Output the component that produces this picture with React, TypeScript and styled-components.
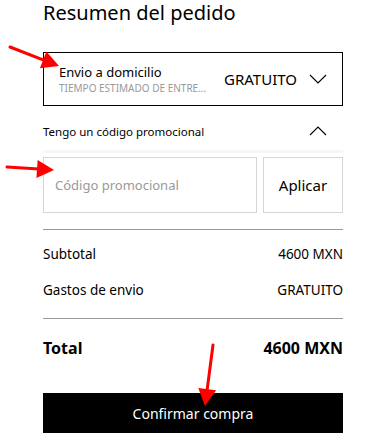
import React from "react";
import styled, { createGlobalStyle } from "styled-components";

const Global = createGlobalStyle`
  html, body { margin: 0; padding: 0; background: #fff; }
  body { font-family: "Noto Sans", "Open Sans", sans-serif; color: #000; }
  * { box-sizing: border-box; }
`;

const Page = styled.div`
  position: relative;
  width: 367px;
  height: 440px;
  overflow: hidden;
  padding-left: 43px;
`;

const Column = styled.div`
  width: 300px;
  display: flex;
  flex-direction: column;
`;

const Title = styled.h1`
  margin: 0;
  font-size: 20px;
  font-weight: 400;
  line-height: 26px;
  height: 26px;
`;

const ShippingBox = styled.div`
  margin-top: 26px;
  height: 54px;
  border: 1px solid #000;
  display: flex;
  align-items: center;
  padding: 0 15px 0 15px;
`;

const ShippingInfo = styled.div`
  flex: 1;
  min-width: 0;
  display: flex;
  flex-direction: column;
  align-items: flex-start;
`;

const ShippingName = styled.div`
  font-size: 13px;
  line-height: 17px;
`;

const ShippingSub = styled.div`
  font-size: 10px;
  line-height: 14px;
  color: #999;
  text-transform: uppercase;
  white-space: nowrap;
`;

const Price = styled.div`
  font-size: 15px;
  margin-right: 12px;
`;

const Chevron = styled.svg`
  display: block;
  flex: none;
`;

const PromoToggle = styled.div`
  height: 44px;
  display: flex;
  align-items: center;
  justify-content: space-between;
  padding-right: 16px;
  padding-top: 6px;
`;

const PromoLabel = styled.span`
  font-size: 11.5px;
`;

const Band = styled.div`
  height: 3px;
  background: #f7f7f7;
`;

const PromoRow = styled.div`
  margin-top: 4px;
  height: 56px;
  display: flex;
  gap: 6px;
`;

const PromoInput = styled.input`
  flex: 1;
  min-width: 0;
  height: 100%;
  border: 1px solid #d6d6d6;
  padding: 0 11px;
  font-family: inherit;
  font-size: 13px;
  outline: none;
  &::placeholder { color: #999; }
`;

const ApplyButton = styled.button`
  width: 80px;
  height: 100%;
  border: 1px solid #d6d6d6;
  background: #fff;
  font-family: inherit;
  font-size: 15px;
  color: #000;
  padding: 0;
`;

const Divider = styled.div<{ $top: number }>`
  height: 1px;
  background: #999;
  margin-top: ${(p) => p.$top}px;
`;

const SummaryRow = styled.div<{ $bold?: boolean; $h: number }>`
  display: flex;
  justify-content: space-between;
  align-items: flex-end;
  height: ${(p) => p.$h}px;
  font-size: ${(p) => (p.$bold ? "16px" : "13.5px")};
  font-weight: ${(p) => (p.$bold ? 700 : 400)};
  line-height: 20px;
`;

const ConfirmButton = styled.button`
  margin-top: 35px;
  height: 40px;
  width: 100%;
  border: none;
  background: #000;
  color: #fff;
  font-family: inherit;
  font-size: 14px;
  padding: 0;
`;

const Arrows = styled.svg`
  position: absolute;
  left: 0;
  top: 0;
  pointer-events: none;
`;

function Arrow({ x1, y1, x2, y2 }: { x1: number; y1: number; x2: number; y2: number }) {
  const dx = x2 - x1;
  const dy = y2 - y1;
  const len = Math.hypot(dx, dy);
  const ux = dx / len;
  const uy = dy / len;
  const hl = 17;
  const hw = 9;
  const bx = x2 - ux * hl;
  const by = y2 - uy * hl;
  const p1 = `${bx - uy * hw},${by + ux * hw}`;
  const p2 = `${bx + uy * hw},${by - ux * hw}`;
  return (
    <g>
      <line x1={x1} y1={y1} x2={bx + ux * 2} y2={by + uy * 2} stroke="#f00" strokeWidth={3} strokeLinecap="round" />
      <polygon points={`${x2},${y2} ${p1} ${p2}`} fill="#f00" />
    </g>
  );
}

export default function App() {
  return (
    <>
      <Global />
      <Page>
        <Column>
          <Title>Resumen del pedido</Title>
          <ShippingBox>
            <ShippingInfo>
              <ShippingName>Envio a domicilio</ShippingName>
              <ShippingSub>Tiempo estimado de entre...</ShippingSub>
            </ShippingInfo>
            <Price>GRATUITO</Price>
            <Chevron width="18" height="10" viewBox="0 0 18 10">
              <polyline points="1,1 9,9 17,1" fill="none" stroke="#000" strokeWidth="1.1" />
            </Chevron>
          </ShippingBox>
          <PromoToggle>
            <PromoLabel>Tengo un código promocional</PromoLabel>
            <Chevron width="18" height="10" viewBox="0 0 18 10">
              <polyline points="1,9 9,1 17,9" fill="none" stroke="#000" strokeWidth="1.1" />
            </Chevron>
          </PromoToggle>
          <Band />
          <PromoRow>
            <PromoInput placeholder="Código promocional" />
            <ApplyButton>Aplicar</ApplyButton>
          </PromoRow>
          <Divider $top={16} />
          <SummaryRow $h={34}>
            <span>Subtotal</span>
            <span>4600 MXN</span>
          </SummaryRow>
          <SummaryRow $h={36}>
            <span>Gastos de envio</span>
            <span>GRATUITO</span>
          </SummaryRow>
          <Divider $top={18} />
          <SummaryRow $h={39} $bold>
            <span>Total</span>
            <span>4600 MXN</span>
          </SummaryRow>
          <ConfirmButton>Confirmar compra</ConfirmButton>
        </Column>
        <Arrows width="367" height="440" viewBox="0 0 367 440">
          <Arrow x1={10} y1={47} x2={59} y2={66} />
          <Arrow x1={7} y1={167} x2={54} y2={170} />
          <Arrow x1={213} y1={345} x2={205} y2={406} />
        </Arrows>
      </Page>
    </>
  );
}
